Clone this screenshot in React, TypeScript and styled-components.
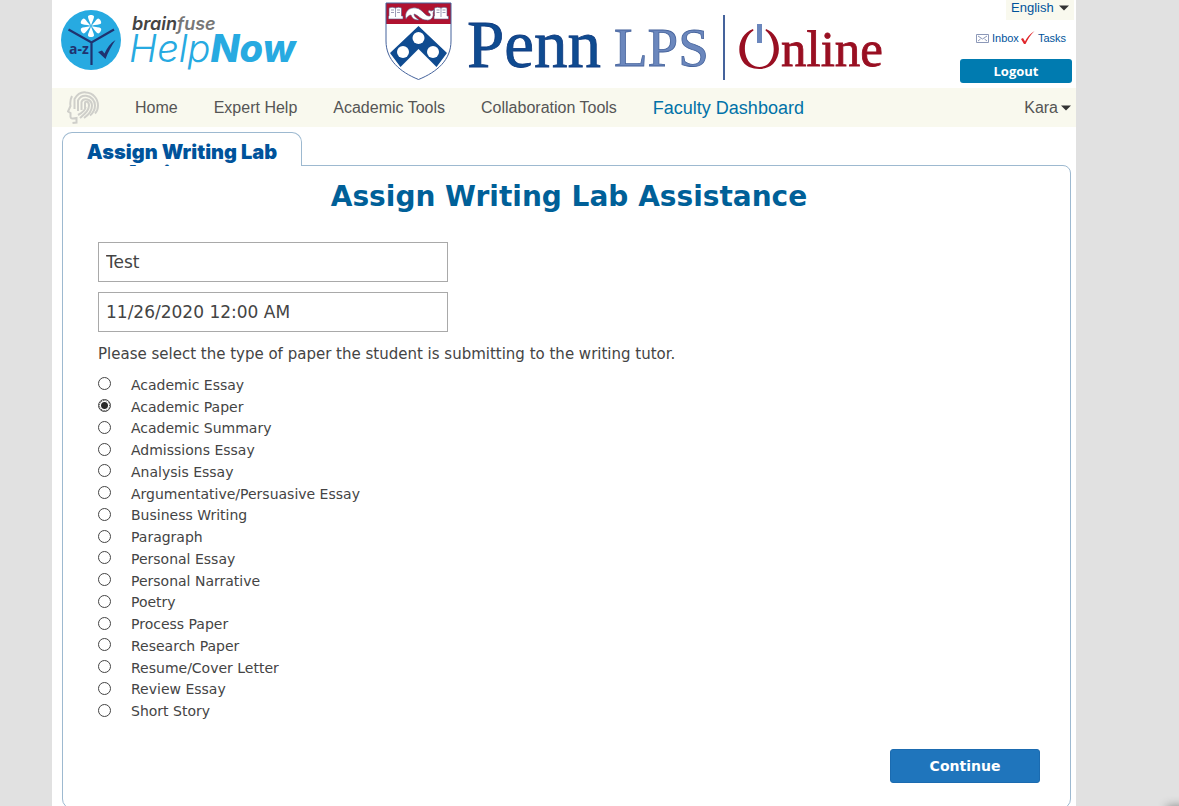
import React, { useState } from "react";
import styled, { createGlobalStyle } from "styled-components";

const GlobalStyle = createGlobalStyle`
  * { box-sizing: border-box; }
  html, body { margin: 0; background: #e1e1e1; }
  body { font-family: Verdana, "DejaVu Sans", sans-serif; color: #444; }
  button, input, select { font-family: inherit; margin: 0; }
`;

const arial = `Arial, "Liberation Sans", sans-serif`;

const Backdrop = styled.div`
  padding: 0 103px 0 52px;
`;

const Page = styled.div`
  background: #fff;
  padding-bottom: 12px;
`;

const Header = styled.header`
  display: flex;
  height: 88px;
  padding: 0 2px 0 9px;
`;

const BrandLink = styled.a`
  display: block;
  height: 88px;
`;

const SchoolLogo = styled.div`
  margin-left: 79px;
  height: 88px;
`;

const Account = styled.div`
  margin-left: auto;
  display: flex;
  flex-direction: column;
  align-items: flex-end;
`;

const Language = styled.label`
  display: flex;
  align-items: center;
  height: 20px;
  padding: 0 5px 4px 5px;
  background: #f9f9ee;
`;

const LanguageSelect = styled.select`
  appearance: none;
  border: 0;
  padding: 0;
  width: 48px;
  background: transparent;
  color: #00539b;
  font: 13px/16px ${arial};
`;

const QuickLinks = styled.div`
  display: flex;
  align-items: center;
  gap: 2px;
  height: 16px;
  margin: 10px 8px 13px 0;
`;

const QuickLink = styled.a`
  display: flex;
  align-items: center;
  gap: 3px;
  color: #00539b;
  text-decoration: none;
  font: 11px/16px ${arial};
`;

const Logout = styled.button`
  width: 112px;
  height: 24px;
  margin-right: 2px;
  padding: 0;
  border: 0;
  border-radius: 3px;
  background: #007bb0;
  color: #fff;
  font: bold 13px/24px "Open Sans", ${arial};
`;

const Nav = styled.nav`
  display: flex;
  align-items: center;
  height: 39px;
  padding: 0 5px 0 15px;
  background: #f9f9ee;
`;

const NavLinks = styled.div`
  display: flex;
  align-items: center;
  gap: 36px;
  margin-left: 36px;
`;

const NavLink = styled.a<{ $active?: boolean }>`
  color: ${(p) => (p.$active ? "#0072a8" : "#555")};
  text-decoration: none;
  font: ${(p) => (p.$active ? 18 : 16)}px/20px ${arial};
`;

const UserMenu = styled.button`
  display: flex;
  align-items: center;
  gap: 3px;
  margin-left: auto;
  border: 0;
  padding: 0;
  background: transparent;
  color: #555;
  && { font: 16px/20px ${arial}; }
`;

const Main = styled.main`
  padding: 5px 5px 0 10px;
`;

const Tab = styled.a`
  display: block;
  position: relative;
  width: 240px;
  height: 34px;
  margin-bottom: -1px;
  padding: 9px 20px 0;
  border: 1px solid #9db9d0;
  border-bottom: 0;
  border-radius: 10px 10px 0 0;
  background: #fff;
  color: #00539b;
  text-align: center;
  text-decoration: none;
  font: 900 20px/21px "Arial Black", Inter, sans-serif;
  overflow: hidden;
`;

const Panel = styled.form`
  border: 1px solid #9db9d0;
  border-radius: 0 8px 10px 10px;
  padding: 14px 30px 25px 35px;
`;

const Title = styled.h1`
  margin: 0 0 28px;
  text-align: center;
  color: #006098;
  font-size: 28px;
  line-height: 34px;
`;

const Field = styled.input`
  display: block;
  width: 350px;
  height: 40px;
  margin-bottom: 10px;
  padding: 0 7px;
  border: 1px solid #a9a9a9;
  background: #fff;
  color: #444;
  font-size: 17px;
`;

const PaperTypes = styled.fieldset`
  margin: 0;
  padding: 0;
  border: 0;
`;

const Legend = styled.legend`
  padding: 2px 0 10px;
  font-size: 15px;
  line-height: 20px;
`;

const Options = styled.div`
  display: grid;
  grid-auto-rows: 1fr;
  min-height: 348px;
`;

const Option = styled.label`
  display: flex;
  align-items: center;
  gap: 20px;
  font-size: 14px;
  line-height: 20px;
`;

const Radio = styled.input`
  appearance: none;
  width: 13px;
  height: 13px;
  margin-bottom: 2px;
  border: 1px solid #444;
  border-radius: 50%;
  background: #fff;
  &:checked {
    background: radial-gradient(circle, #2a2a2a 0 3px, #fff 4px);
    outline: 1px dotted #444;
    outline-offset: -2px;
  }
`;

const Actions = styled.div`
  display: flex;
  justify-content: flex-end;
  margin-top: 27px;
`;

const Continue = styled.button`
  width: 150px;
  height: 34px;
  border: 1px solid #1b6bb0;
  border-radius: 3px;
  background: #1f75bc;
  color: #fff;
  font-size: 14px;
  font-weight: bold;
`;

const CornerShadow = styled.div`
  position: fixed;
  right: -10px;
  bottom: -12px;
  width: 20px;
  height: 10px;
  box-shadow: 0 0 10px 2px #888;
`;

const Caret = () => (
  <svg width="10" height="6" viewBox="0 0 10 6" aria-hidden="true">
    <path d="M0 .5h10L5 5.5z" fill="#333" />
  </svg>
);

const HelpNowLogo = () => (
  <svg width="244" height="88" viewBox="0 0 244 88" role="img" aria-label="Brainfuse HelpNow">
    <circle cx="30" cy="40" r="30" fill="#27aae1" />
    <g stroke="#1f3370" strokeWidth="2.2" fill="none">
      <path d="M7.500 29.500 30.500 42.500 53 29.500M30.500 42v23" />
    </g>
    <g fill="#fff">
      {[0, 60, 120, 180, 240, 300].map((a) => (
        <path key={a} d="M30 25.500C28.500 21 26.800 18 27 16.500 27.300 14.500 32.700 14.500 33 16.500 33.200 18 31.500 21 30 25.500z" transform={`rotate(${a} 30 26)`} />
      ))}
    </g>
    <text x="8" y="54" fontFamily="'Open Sans', sans-serif" fontWeight="700" fontSize="14" fill="#1f3370">a-z</text>
    <path d="M37 52l4-1.500 2.500 3C46 48 49.500 43 54.500 40 50.500 46 47 52 44.500 59z" fill="#1f3370" />
    <g fontFamily="Inter, sans-serif" fontStyle="italic">
      <text x="71" y="30" fontWeight="600" fontSize="18" fill="#444">
        brain<tspan fill="#777">fuse</tspan>
      </text>
      <text x="68" y="62" fontWeight="300" fontSize="38" fill="#27aae1">
        Help<tspan fontWeight="800">Now</tspan>
      </text>
    </g>
  </svg>
);

const PennLogo = () => (
  <svg width="502" height="88" viewBox="384 0 502 88" role="img" aria-label="Penn LPS Online">
    <defs>
      <clipPath id="shield">
        <path d="M386 3h65v38c0 19-14 31-32.500 38.500C400 72 386 60 386 41z" />
      </clipPath>
    </defs>
    <g clipPath="url(#shield)">
      <path d="M386 3h65v78h-65z" fill="#fff" />
      <path d="M386 3h65v21h-65z" fill="#b01230" />
      <path d="M418.500 26 447 53 436.500 67 418.500 49 400.500 67 390 53z" fill="#0f4b90" />
      <circle cx="418.500" cy="38" r="6" fill="#fff" />
      <circle cx="403" cy="52" r="6" fill="#fff" />
      <circle cx="433" cy="52" r="6" fill="#fff" />
    </g>
    <g fill="#fff" stroke="#5a5d86" strokeWidth=".6">
      <path d="M389 8q3-1.500 6.500 0 3-1.500 6 0v8h1.500v3h-14.500v-3H389z" />
      <path d="M434.500 8q3-1.500 6.500 0 3-1.500 6 0v8h1.500v3H434v-3h.5z" />
      <path d="M395.500 8v9M441 8v9M391 10h3M391 12.500h3M397 10h3M397 12.500h3M436.500 10h3M436.500 12.500h3M442.500 10h3M442.500 12.500h3" />
      <path d="M406 19c-2-7 3-12 10-11 7 1 9 9 14 8 1-1 0-3-2-4l1-2 2 1 3-1-1 3c1 4-2 8-7 7-5 0-8-5-12-6 0 3 3 4 5 6-5 0-7-2-8-5-2 0-4 2-5 4z" />
    </g>
    <path d="M386 3h65v38c0 19-14 31-32.500 38.500C400 72 386 60 386 41z" fill="none" stroke="#45639c" strokeWidth="1" />
    <g fontFamily="'Liberation Serif', 'Times New Roman', serif">
      <text x="467" y="67" fontSize="67" fill="#0f4b90" stroke="#0f3b80" strokeWidth=".8">Penn</text>
      <text x="614" y="66" fontSize="55" fill="#6b87bd" stroke="#45639c" strokeWidth=".8">LPS</text>
      <text x="781" y="66" fontSize="51" fill="#990f22" stroke="#990f22" strokeWidth=".8">nline</text>
    </g>
    <path d="M724 15v65" stroke="#45639c" strokeWidth="2" />
    <path d="M753 29C736 35 735 60 749 67c8 3 17 3 24-3 10-10 7-30-7-35l-.5 1.500C776 39 776 57 768 64c-5 4-12 4-17 0-9-8-8-27 2.500-33.500z" fill="#990f22" />
    <path d="M757 24h5v19h-5z" fill="#6b87bd" />
  </svg>
);

const BrainIcon = () => (
  <svg width="32" height="34" viewBox="0 0 32 34" fill="none" stroke="#cfcfca" strokeWidth="2" aria-hidden="true">
    <path d="M5 5C3 9 3 12 3.500 15L1 20.500 3.500 22v4c0 1.500 2 2 6 1v4.500l-4 .5" />
    <path d="M7.500 18V8C11 2 16 1 19 1.500c7 .5 12 6 12 13 0 3-1 6-3 8" />
    <path d="M11 20V9.500C13 5.500 16 4.500 19 4.800c5.500.5 9 4.700 9 9.700 0 4-2 7.500-5 10" />
    <path d="M14.500 19v-8c1.500-4 10-4 10.500 3.500 0 5-3 9-8 12.500" />
    <path d="M18 18v-6c0-2 4-2 4 2.500 0 5-4 8-9 12.500" />
    <path d="M18.500 16c0 3-2 5-7.500 8" />
  </svg>
);

const EnvelopeIcon = () => (
  <svg width="13" height="9" viewBox="0 0 13 9" fill="none" stroke="#8c98b8" aria-hidden="true">
    <path d="M.5.5h12v8H.5zM2 2l4.500 3L11 2M2 7l2.500-2M11 7 8.500 5" />
  </svg>
);

const CheckIcon = () => (
  <svg width="14" height="14" viewBox="0 0 14 14" aria-hidden="true">
    <path d="M0 8l2-1 2 3.500C6 6 9 3 13.500 0 9.500 4 6.500 8.500 4.500 13H3z" fill="#e0262b" />
  </svg>
);

const paperTypes = [
  "Academic Essay",
  "Academic Paper",
  "Academic Summary",
  "Admissions Essay",
  "Analysis Essay",
  "Argumentative/Persuasive Essay",
  "Business Writing",
  "Paragraph",
  "Personal Essay",
  "Personal Narrative",
  "Poetry",
  "Process Paper",
  "Research Paper",
  "Resume/Cover Letter",
  "Review Essay",
  "Short Story",
];

export default function App() {
  const [paperType, setPaperType] = useState("Academic Paper");
  return (
    <Backdrop>
      <GlobalStyle />
      <Page>
        <Header>
          <BrandLink href="#home"><HelpNowLogo /></BrandLink>
          <SchoolLogo><PennLogo /></SchoolLogo>
          <Account>
            <Language>
              <LanguageSelect aria-label="Language"><option>English</option></LanguageSelect>
              <Caret />
            </Language>
            <QuickLinks>
              <QuickLink href="#inbox"><EnvelopeIcon />Inbox</QuickLink>
              <QuickLink href="#tasks"><CheckIcon />Tasks</QuickLink>
            </QuickLinks>
            <Logout type="button">Logout</Logout>
          </Account>
        </Header>
        <Nav>
          <BrainIcon />
          <NavLinks>
            <NavLink href="#home">Home</NavLink>
            <NavLink href="#expert">Expert Help</NavLink>
            <NavLink href="#academic">Academic Tools</NavLink>
            <NavLink href="#collaboration">Collaboration Tools</NavLink>
            <NavLink href="#faculty" $active>Faculty Dashboard</NavLink>
          </NavLinks>
          <UserMenu type="button">Kara<Caret /></UserMenu>
        </Nav>
        <Main>
          <Tab href="#assign">Assign Writing Lab Assistance</Tab>
          <Panel onSubmit={(e) => e.preventDefault()}>
            <Title>Assign Writing Lab Assistance</Title>
            <Field type="text" aria-label="Assignment name" defaultValue="Test" />
            <Field type="text" aria-label="Due date" defaultValue="11/26/2020 12:00 AM" />
            <PaperTypes>
              <Legend>Please select the type of paper the student is submitting to the writing tutor.</Legend>
              <Options>
                {paperTypes.map((type) => (
                  <Option key={type}>
                    <Radio type="radio" name="paperType" checked={paperType === type} onChange={() => setPaperType(type)} />
                    {type}
                  </Option>
                ))}
              </Options>
            </PaperTypes>
            <Actions><Continue type="submit">Continue</Continue></Actions>
          </Panel>
        </Main>
      </Page>
      <CornerShadow />
    </Backdrop>
  );
}
